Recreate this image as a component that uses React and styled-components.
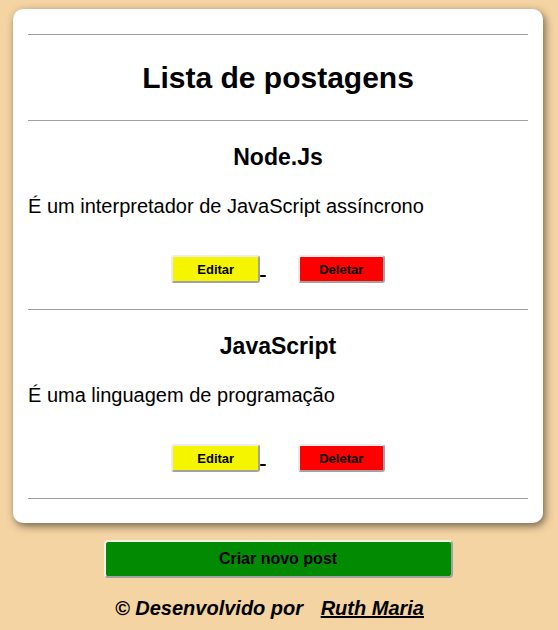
import React from "react";
import styled, { createGlobalStyle } from "styled-components";

const GlobalStyle = createGlobalStyle`
  html, body {
    margin: 0;
    padding: 0;
    background: #f5d4a3;
    font-family: "Liberation Sans", Arial, sans-serif;
    color: #000;
  }
`;

const Page = styled.div`
  display: flex;
  flex-direction: column;
  align-items: center;
  padding: 9px 15px 0 13px;
`;

const Card = styled.main`
  align-self: stretch;
  background: #fff;
  border-radius: 10px;
  box-shadow: 2px 3px 9px rgba(0, 0, 0, 0.55);
  padding: 25px 15px 24px;
`;

const Divider = styled.hr`
  margin: 0;
  border: none;
  height: 1px;
  background: #a0a0a0;
`;

const Title = styled.h2`
  margin: 25px 0;
  font-size: 30px;
  line-height: 35px;
  font-weight: bold;
  text-align: center;
`;

const PostTitle = styled.h3`
  margin: 23px 0 0;
  font-size: 23px;
  line-height: 27px;
  font-weight: bold;
  text-align: center;
`;

const PostBody = styled.p`
  margin: 24px 0 0;
  font-size: 20px;
  line-height: 23px;
`;

const Actions = styled.div`
  display: flex;
  justify-content: center;
  align-items: baseline;
  margin: 37px 0 26px;
  font-size: 20px;
  line-height: 23px;
`;

const ActionButton = styled.button`
  box-sizing: border-box;
  width: ${(p) => p.$width}px;
  height: 28px;
  padding: 0;
  font-family: "Liberation Sans", Arial, sans-serif;
  font-size: 13px;
  font-weight: bold;
  color: #000;
  background: ${(p) => p.$color};
  border: 2px solid;
  border-color: #ececec #a2a2a2 #a2a2a2 #ececec;
  border-radius: 3px;
  cursor: pointer;
`;

const UnderlinedSpace = styled.span`
  text-decoration: underline;
  white-space: pre;
`;

const DeleteForm = styled.form`
  margin-left: 32px;
`;

const CreateButton = styled.button`
  box-sizing: border-box;
  width: 349px;
  height: 38px;
  margin-top: 17px;
  font-family: "Liberation Sans", Arial, sans-serif;
  font-size: 16px;
  font-weight: bold;
  color: #000;
  background: #028a02;
  border: 2px solid;
  border-color: #f4f0ea #a2a2a2 #a2a2a2 #f4f0ea;
  border-radius: 4px;
  cursor: pointer;
`;

const Footer = styled.footer`
  margin-top: 19px;
  padding-right: 17px;
  font-size: 20px;
  line-height: 23px;
  font-weight: bold;
  font-style: italic;
  text-align: center;
`;

const AuthorLink = styled.a`
  margin-left: 12px;
  color: #000;
  text-decoration: underline;
`;

const posts = [
  { title: "Node.Js", body: "É um interpretador de JavaScript assíncrono" },
  { title: "JavaScript", body: "É uma linguagem de programação" },
];

function Post({ title, body }) {
  return (
    <>
      <PostTitle>{title}</PostTitle>
      <PostBody>{body}</PostBody>
      <Actions>
        <ActionButton $color="#f5f500" $width={89}>Editar</ActionButton>
        <UnderlinedSpace> </UnderlinedSpace>
        <DeleteForm onSubmit={(e) => e.preventDefault()}>
          <ActionButton $color="#ff0000" $width={87} type="submit">Deletar</ActionButton>
        </DeleteForm>
      </Actions>
      <Divider />
    </>
  );
}

export default function App() {
  return (
    <>
      <GlobalStyle />
      <Page>
        <Card>
          <Divider />
          <Title>Lista de postagens</Title>
          <Divider />
          {posts.map((p) => (
            <Post key={p.title} {...p} />
          ))}
        </Card>
        <CreateButton>Criar novo post</CreateButton>
        <Footer>
          © Desenvolvido por <AuthorLink href="#">Ruth Maria</AuthorLink>
        </Footer>
      </Page>
    </>
  );
}
